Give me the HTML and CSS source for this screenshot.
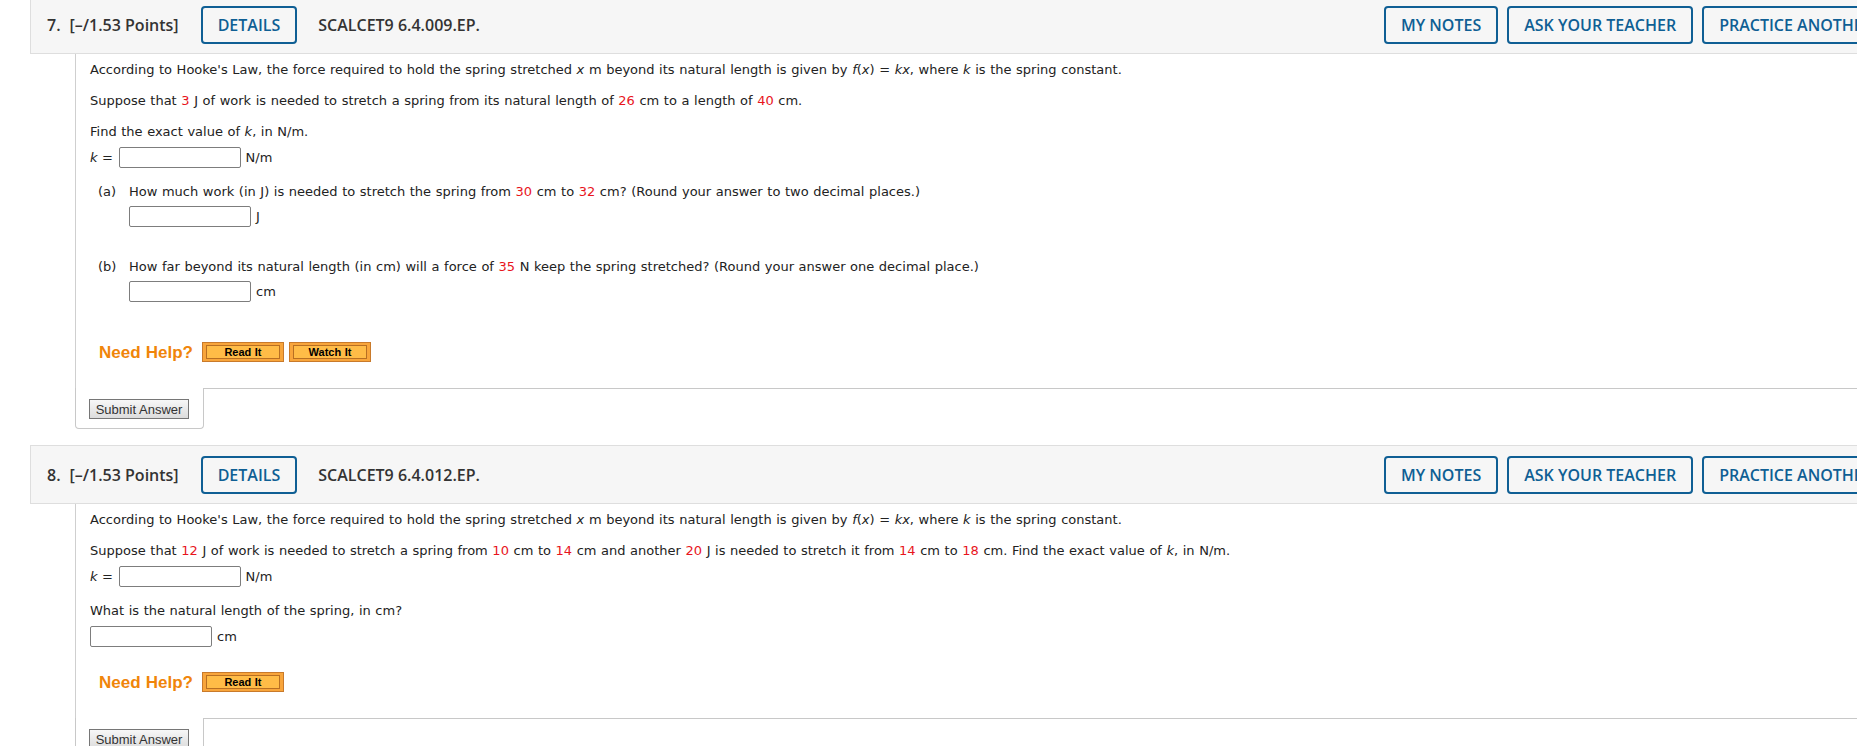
FILE: index.html
```html
<!DOCTYPE html>
<html>
<head>
<meta charset="utf-8">
<title>Questions</title>
<link rel="stylesheet" href="styles.css">
</head>
<body>
<div class="questions">
  <section class="question">
    <header class="q-head">
      <div class="q-title"><span class="q-num">7.</span><span class="q-pts">[–/1.53 Points]</span></div>
      <button class="btn-outline">DETAILS</button>
      <span class="q-code">SCALCET9 6.4.009.EP.</span>
      <div class="q-actions">
        <button class="btn-outline">MY NOTES</button>
        <button class="btn-outline">ASK YOUR TEACHER</button>
        <button class="btn-outline">PRACTICE ANOTHER</button>
      </div>
    </header>
    <div class="q-main">
      <div class="q-body">
        <p>According to Hooke's Law, the force required to hold the spring stretched <i>x</i> m beyond its natural length is given by <i>f</i>(<i>x</i>) = <i>kx</i>, where <i>k</i> is the spring constant.</p>
        <p>Suppose that <span class="red">3</span> J of work is needed to stretch a spring from its natural length of <span class="red">26</span> cm to a length of <span class="red">40</span> cm.</p>
        <p class="tight">Find the exact value of <i>k</i>, in N/m.</p>
        <div class="ans ans-k"><i>k</i>&nbsp;=&nbsp;<input class="ans-box" type="text"><span>N/m</span></div>
        <div class="parts">
          <div class="part">
            <span class="part-label">(a)</span>
            <div class="part-content">
              <p>How much work (in J) is needed to stretch the spring from <span class="red">30</span> cm to <span class="red">32</span> cm? (Round your answer to two decimal places.)</p>
              <div class="ans"><input class="ans-box" type="text"><span>J</span></div>
            </div>
          </div>
          <div class="part">
            <span class="part-label">(b)</span>
            <div class="part-content">
              <p>How far beyond its natural length (in cm) will a force of <span class="red">35</span> N keep the spring stretched? (Round your answer one decimal place.)</p>
              <div class="ans"><input class="ans-box" type="text"><span>cm</span></div>
            </div>
          </div>
        </div>
        <div class="need-help">
          <span class="need-help-label">Need Help?</span>
          <a class="help-btn"><span>Read It</span></a>
          <a class="help-btn"><span>Watch It</span></a>
        </div>
      </div>
      <div class="submit-row">
        <div class="submit-cell"><button class="submit-btn">Submit Answer</button></div>
        <div class="submit-fill"></div>
      </div>
    </div>
  </section>

  <section class="question">
    <header class="q-head">
      <div class="q-title"><span class="q-num">8.</span><span class="q-pts">[–/1.53 Points]</span></div>
      <button class="btn-outline">DETAILS</button>
      <span class="q-code">SCALCET9 6.4.012.EP.</span>
      <div class="q-actions">
        <button class="btn-outline">MY NOTES</button>
        <button class="btn-outline">ASK YOUR TEACHER</button>
        <button class="btn-outline">PRACTICE ANOTHER</button>
      </div>
    </header>
    <div class="q-main">
      <div class="q-body">
        <p>According to Hooke's Law, the force required to hold the spring stretched <i>x</i> m beyond its natural length is given by <i>f</i>(<i>x</i>) = <i>kx</i>, where <i>k</i> is the spring constant.</p>
        <p class="tight">Suppose that <span class="red">12</span> J of work is needed to stretch a spring from <span class="red">10</span> cm to <span class="red">14</span> cm and another <span class="red">20</span> J is needed to stretch it from <span class="red">14</span> cm to <span class="red">18</span> cm. Find the exact value of <i>k</i>, in N/m.</p>
        <div class="ans ans-k"><i>k</i>&nbsp;=&nbsp;<input class="ans-box" type="text"><span>N/m</span></div>
        <p class="tight">What is the natural length of the spring, in cm?</p>
        <div class="ans"><input class="ans-box" type="text"><span>cm</span></div>
        <div class="need-help">
          <span class="need-help-label">Need Help?</span>
          <a class="help-btn"><span>Read It</span></a>
        </div>
      </div>
      <div class="submit-row">
        <div class="submit-cell"><button class="submit-btn">Submit Answer</button></div>
        <div class="submit-fill"></div>
      </div>
    </div>
  </section>
</div>
</body>
</html>
```
FILE: styles.css
```css
html, body {
  margin: 0;
  padding: 0;
  background: #fff;
  overflow: hidden;
}

.questions {
  padding-left: 30px;
  margin-top: -5px;
  width: 1877px;
}

.question {
  margin-bottom: 16px;
}

.q-head {
  display: flex;
  align-items: center;
  padding: 10px 16px 9px 16px;
  background: #f6f6f6;
  border: 1px solid #dedede;
  font-family: "Open Sans", "Liberation Sans", sans-serif;
  color: #333;
}

.q-title {
  font-size: 16px;
  font-weight: 600;
  margin-right: 22px;
  white-space: nowrap;
}

.q-pts {
  margin-left: 9px;
}

.q-code {
  font-size: 16px;
  font-weight: 600;
  margin-left: 21px;
  white-space: nowrap;
}

.btn-outline {
  height: 38px;
  padding: 0 15px;
  border: 2px solid #0f5f94;
  border-radius: 4px;
  background: transparent;
  color: #0f5f94;
  font-family: "Open Sans", "Liberation Sans", sans-serif;
  font-size: 16px;
  font-weight: 600;
  white-space: nowrap;
}

.q-actions {
  margin-left: auto;
  display: flex;
  gap: 9px;
}

.q-main {
  margin-left: 45px;
}

.q-body {
  display: flow-root;
  border-left: 1px solid #cfcfcf;
  padding: 8px 0 0 14px;
  font-family: "DejaVu Sans", Verdana, sans-serif;
  font-size: 13px;
  line-height: 15px;
  word-spacing: 0.45px;
  color: #222;
}

.q-body p {
  margin: 0 0 16px 0;
}

.q-body p.tight {
  margin-bottom: 8px;
}

.red {
  color: #e8141c;
}

.ans {
  display: flex;
  align-items: center;
  height: 21px;
  white-space: nowrap;
}

.ans-k {
  margin-bottom: 16px;
}

.ans-k .ans-box {
  margin-left: 1px;
}

.ans-box {
  box-sizing: border-box;
  width: 122px;
  height: 21px;
  margin: 0 5px 0 0;
  border: 1px solid #7d7d7d;
  border-radius: 2px;
  background: #fff;
  padding: 0;
}

.parts {
  padding-bottom: 15px;
}

.part {
  display: flex;
  margin-left: 8px;
  margin-bottom: 32px;
}

.part:last-child {
  margin-bottom: 0;
}

.part-label {
  width: 31px;
  flex: none;
}

.part-content p {
  margin: 0 0 7px 0;
}

.need-help {
  display: flex;
  align-items: center;
  margin: 25px 0 26px 9px;
  height: 20px;
}

.need-help-label {
  font-family: "Liberation Sans", Arial, sans-serif;
  font-weight: bold;
  font-size: 17px;
  color: #f0850a;
  margin-right: 9px;
}

.help-btn {
  display: block;
  border: 1px solid #c97a2b;
  background: #f8a53b;
  padding: 2px 3px;
  margin-right: 5px;
}

.help-btn span {
  display: block;
  width: 72px;
  height: 12px;
  line-height: 12px;
  border: 1px solid #b86f22;
  background: #ffbc47;
  font-family: "Liberation Sans", Arial, sans-serif;
  font-weight: bold;
  font-size: 11px;
  text-align: center;
  color: #000;
}

.submit-row {
  display: flex;
}

.submit-cell {
  border: 1px solid #c8c8c8;
  border-top: none;
  border-radius: 0 0 4px 4px;
  padding: 11px 14px 9px 13px;
}

.submit-fill {
  flex: 1;
  border-top: 1px solid #c8c8c8;
}

.submit-btn {
  display: block;
  box-sizing: border-box;
  width: 100px;
  height: 20px;
  padding: 0;
  border: 1px solid #767676;
  background: linear-gradient(#f7f7f7, #dcdcdc);
  font-family: "Liberation Sans", Arial, sans-serif;
  font-size: 13px;
  color: #333;
}
```
